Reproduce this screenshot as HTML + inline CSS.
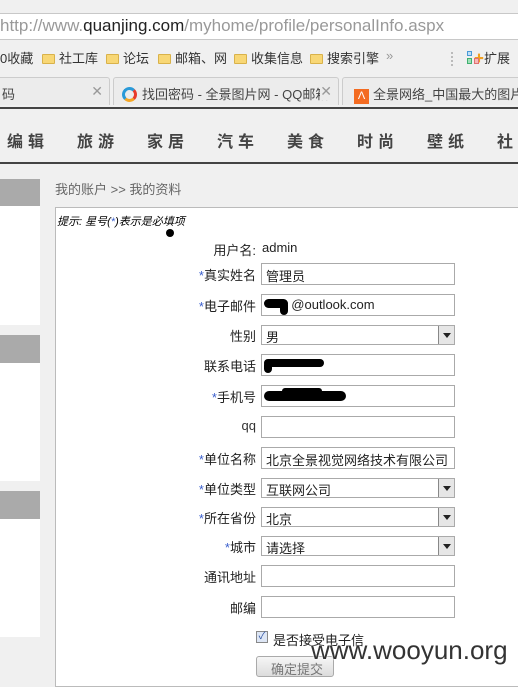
<!DOCTYPE html>
<html><head><meta charset="utf-8"><style>
*{margin:0;padding:0;box-sizing:border-box}
body{width:518px;height:682px;overflow:hidden;background:#f0f0f0;font-family:"Liberation Sans","Noto Sans CJK SC",sans-serif;font-size:13px;color:#222;position:relative}
.a{position:absolute}
.url{left:0;top:13px;width:518px;height:27px;background:#fff;border-top:1px solid #c8c8c8;border-bottom:1px solid #c8c8c8;font-size:17px;color:#999;padding:2px 0 0 0;white-space:nowrap}
.url b{color:#222;font-weight:normal}
.bm{top:48px;font-size:13px;color:#333;white-space:nowrap}
.fold{display:inline-block;width:13px;height:10px;background:#f8d775;border:1px solid #d9b24a;border-radius:1px;margin:0 4px -1px 0}
.tab{top:77px;height:28px;background:#ececec;border:1px solid #ccc;border-bottom:none;border-radius:3px 3px 0 0;font-size:13px;color:#444;padding:6px 0 0 6px;white-space:nowrap;overflow:hidden}
.x{position:absolute;right:6px;top:5px;color:#999;font-size:14px}
.nav{left:0;top:107px;width:518px;height:57px;border-top:2px solid #444;border-bottom:2px solid #444;background:#f0f0f0;overflow:hidden}
.nav span{position:absolute;top:19px;font-size:16px;font-weight:bold;color:#444;letter-spacing:5px;white-space:nowrap}
.g{background:#aaa;left:0;width:40px}
.w{background:#fff;left:0;width:40px}
.main{left:55px;top:207px;width:470px;height:480px;background:#fff;border:1px solid #bbb}
.lab{position:absolute;right:262px;font-size:13px;color:#222;text-align:right;white-space:nowrap}
.lab i{font-style:normal;color:#3a5fcd}
.in{position:absolute;left:261px;width:194px;height:22px;border:1px solid #aaa;background:#fff;font-size:13px;padding:2px 0 0 4px;white-space:nowrap}
.sel .dd{position:absolute;right:0;top:0;width:16px;height:100%;background:#e6e6e6;border-left:1px solid #888}
.sel .dd:after{content:"";position:absolute;left:4px;top:7px;border:4px solid transparent;border-top:5px solid #222}
.blot{position:absolute;background:#000;border-radius:8px}
</style></head><body>
<div class="a url">http://www.<b>quanjing.com</b>/myhome/profile/personalInfo.aspx</div>
<div class="a bm" style="left:0">0收藏</div>
<div class="a bm" style="left:42px"><span class="fold"></span>社工库</div>
<div class="a bm" style="left:106px"><span class="fold"></span>论坛</div>
<div class="a bm" style="left:158px"><span class="fold"></span>邮箱、网</div>
<div class="a bm" style="left:234px"><span class="fold"></span>收集信息</div>
<div class="a bm" style="left:310px"><span class="fold"></span>搜索引擎</div>
<div class="a bm" style="left:386px;color:#999">»</div>
<div class="a" style="left:451px;top:52px;width:2px;height:14px;border-left:2px dotted #bbb"></div>
<div class="a" style="left:467px;top:51px;width:5px;height:5px;border:1px solid #4a9ad8;background:#bfe0f7"></div>
<div class="a" style="left:474px;top:50px;color:#f0a020;font-size:10px;font-weight:bold">✚</div>
<div class="a" style="left:467px;top:58px;width:5px;height:6px;border:1px solid #3fb070;background:#9fe0b8"></div>
<div class="a" style="left:474px;top:58px;width:5px;height:6px;border:1px solid #e07070;background:#f6b8b8"></div>
<div class="a bm" style="left:484px">扩展</div>
<div class="a tab" style="left:-5px;width:115px">码<span class="x">✕</span></div>
<div class="a tab" style="left:113px;width:226px"><span style="display:inline-block;width:15px;height:15px;border-radius:50%;border:3px solid #2a9ad8;border-right-color:#e83a2a;border-bottom-color:#f5a623;margin:0 5px -3px 2px"></span>找回密码 - 全景图片网 - QQ邮箱<span class="x" style="background:#ececec">✕</span></div>
<div class="a tab" style="left:342px;width:190px"><span style="display:inline-block;width:15px;height:15px;background:#f36b21;color:#fff;font-size:11px;text-align:center;line-height:15px;margin:0 4px -3px 5px">Λ</span>全景网络_中国最大的图片库</div>
<div class="a nav">
<span style="left:7px">编辑</span><span style="left:77px">旅游</span><span style="left:147px">家居</span><span style="left:217px">汽车</span><span style="left:287px">美食</span><span style="left:357px">时尚</span><span style="left:427px">壁纸</span><span style="left:497px">社区</span>
</div>
<div class="a g" style="top:179px;height:27px"></div>
<div class="a w" style="top:206px;height:119px"></div>
<div class="a g" style="top:335px;height:28px"></div>
<div class="a w" style="top:363px;height:118px"></div>
<div class="a g" style="top:491px;height:28px"></div>
<div class="a w" style="top:519px;height:118px"></div>
<div class="a" style="left:55px;top:179px;font-size:13px;color:#666">我的账户 &gt;&gt; 我的资料</div>
<div class="a main"></div>
<div class="a" style="left:57px;top:213px;font-size:11px;font-style:italic;color:#000">提示: 星号(<span style="color:#3a5fcd">*</span>)表示是必填项</div>
<div class="a" style="left:166px;top:229px;width:8px;height:8px;border-radius:50%;background:#000"></div>
<div class="lab" style="top:240px">用户名:</div><div class="a" style="left:262px;top:240px;color:#222">admin</div>
<div class="lab" style="top:265px"><i>*</i>真实姓名</div><div class="in" style="top:263px">管理员</div>
<div class="lab" style="top:296px"><i>*</i>电子邮件</div><div class="in" style="top:294px">&nbsp;&nbsp;&nbsp;&nbsp;&nbsp;&nbsp;&nbsp;@outlook.com<div class="blot" style="left:2px;top:4px;width:24px;height:9px"></div><div class="blot" style="left:18px;top:6px;width:8px;height:14px"></div></div>
<div class="lab" style="top:326px">性别</div><div class="in sel" style="top:325px;height:20px;padding-top:1px">男<div class="dd"></div></div>
<div class="lab" style="top:356px">联系电话</div><div class="in" style="top:354px"><div class="blot" style="left:2px;top:4px;width:60px;height:8px"></div><div class="blot" style="left:2px;top:6px;width:8px;height:12px"></div></div>
<div class="lab" style="top:387px"><i>*</i>手机号</div><div class="in" style="top:385px"><div class="blot" style="left:2px;top:5px;width:82px;height:10px"></div><div class="blot" style="left:20px;top:2px;width:40px;height:6px"></div></div>
<div class="lab" style="top:418px;color:#333">qq</div><div class="in" style="top:416px"></div>
<div class="lab" style="top:449px"><i>*</i>单位名称</div><div class="in" style="top:447px">北京全景视觉网络技术有限公司</div>
<div class="lab" style="top:479px"><i>*</i>单位类型</div><div class="in sel" style="top:478px;height:20px;padding-top:1px">互联网公司<div class="dd"></div></div>
<div class="lab" style="top:508px"><i>*</i>所在省份</div><div class="in sel" style="top:507px;height:20px;padding-top:1px">北京<div class="dd"></div></div>
<div class="lab" style="top:537px"><i>*</i>城市</div><div class="in sel" style="top:536px;height:20px;padding-top:1px">请选择<div class="dd"></div></div>
<div class="lab" style="top:567px">通讯地址</div><div class="in" style="top:565px"></div>
<div class="lab" style="top:598px">邮编</div><div class="in" style="top:596px"></div>
<div class="a" style="left:256px;top:631px;width:12px;height:12px;border:1px solid #888;background:#dde6f5;font-size:10px;color:#2a4fa0;line-height:10px;text-align:center">✓</div>
<div class="a" style="left:273px;top:630px;font-size:13px">是否接受电子信</div>
<div class="a" style="left:256px;top:656px;width:78px;height:21px;border:1px solid #aaa;border-radius:3px;background:linear-gradient(#f6f6f6,#dcdcdc);font-size:13px;color:#777;padding:2px 0 0 14px">确定提交</div>
<div class="a" style="left:311px;top:635px;font-size:26px;color:#333;text-shadow:0 0 2px #fff,0 0 2px #fff">www.wooyun.org</div>
</body></html>
